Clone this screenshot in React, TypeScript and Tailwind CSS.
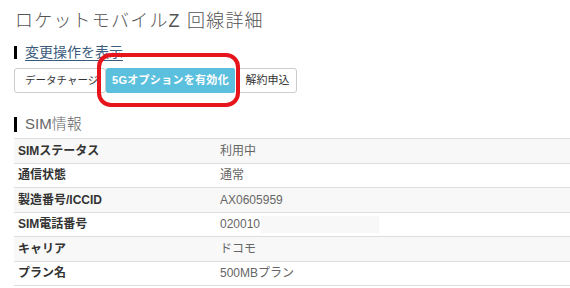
import React from 'react'

const rows = [
    { label: 'SIMステータス', value: '利用中' },
    { label: '通信状態', value: '通常' },
    { label: '製造番号/ICCID', value: 'AX0605959' },
    { label: 'SIM電話番号', value: '020010', masked: true },
    { label: 'キャリア', value: 'ドコモ' },
    { label: 'プラン名', value: '500MBプラン' },
]

export default function App() {
    return (
        <div
            className="relative w-[570px] h-[288px] overflow-hidden bg-white text-[#333]"
            style={{ fontFamily: '"Liberation Sans", "Noto Sans CJK JP", sans-serif' }}
        >
            {/* Title */}
            <h1 className="pl-[15px] pt-[9px] text-[18px] leading-[24px] font-light tracking-[1.2px] text-[#555]">
                ロケットモバイルZ 回線詳細
            </h1>

            {/* Change operations */}
            <div className="mt-[12px] ml-[14px] flex items-center h-[14px]">
                <span className="w-[3px] h-[13px] bg-black" />
                <a className="ml-[8px] text-[14px] leading-[14px] text-[#3b5b7d] underline underline-offset-[3px] decoration-[1px]">
                    変更操作を表示
                </a>
            </div>

            <div className="mt-[9px] ml-[14px] flex items-center h-[25px]">
                <button className="h-[25px] w-[92px] pl-[10px] text-left rounded-[3px] border border-[#ccc] bg-white text-[10.5px] text-[#333] whitespace-nowrap overflow-hidden">
                    データチャージ
                </button>
                <button className="h-[25px] w-[129px] rounded-[2px] bg-[#5bc0de] text-white text-[11px] font-bold tracking-[0.3px]">
                    5Gオプションを有効化
                </button>
                <button className="ml-[3px] h-[25px] w-[59px] rounded-[3px] border border-[#ccc] bg-white text-[11px] text-[#333]">
                    解約申込
                </button>
            </div>

            {/* Highlight marker */}
            <div className="absolute left-[97px] top-[53px] w-[143px] h-[54px] rounded-[14px] border-[4px] border-[#e8141c]" />

            {/* SIM info */}
            <div className="mt-[23px] ml-[14px] flex items-center h-[16px]">
                <span className="w-[3px] h-[15px] bg-black" />
                <span className="ml-[8px] text-[15px] leading-[16px] font-light text-[#666]">SIM情報</span>
            </div>

            <div className="mt-[6px] ml-[14px] border-t border-[#ddd]">
                {rows.map((row, i) => (
                    <div
                        key={i}
                        className={`flex items-center h-[24.5px] border-b border-[#ddd] ${i % 2 === 0 ? 'bg-[#f8f8f8]' : 'bg-white'}`}
                    >
                        <div className="w-[206px] pl-[4px] text-[12px] font-bold text-[#333]">{row.label}</div>
                        <div className="flex items-center text-[12px] text-[#666]">
                            {row.value}
                            {row.masked && <span className="ml-[1px] w-[118px] h-[17px] bg-[#f8f8f8]" />}
                        </div>
                    </div>
                ))}
            </div>
        </div>
    )
}
